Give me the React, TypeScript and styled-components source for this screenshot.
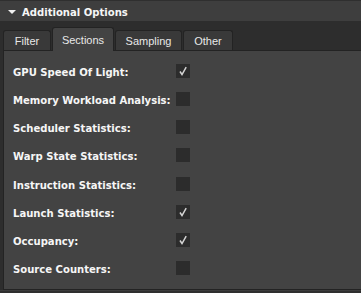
import React from "react";
import styled, { createGlobalStyle } from "styled-components";

const Global = createGlobalStyle`
  html, body { margin: 0; padding: 0; background: #2d2d2d; }
  body { font-family: "DejaVu Sans Condensed", "DejaVu Sans", sans-serif; }
`;

const Root = styled.div`
  width: 361px;
  height: 293px;
  display: flex;
  flex-direction: column;
  background: #2d2d2d;
  overflow: hidden;
`;

const Header = styled.div`
  height: 21px;
  box-sizing: border-box;
  padding: 2px 0 0 8px;
  border-top: 1px solid #2f2f2f;
  background: #3e3e3e;
  display: flex;
  align-items: center;
  gap: 6px;
  color: #f6f6f6;
  font-family: "DejaVu Sans Condensed", "DejaVu Sans", sans-serif;
  font-stretch: condensed;
  font-weight: bold;
  font-size: 11.2px;
`;

const Arrow = styled.span`
  width: 0;
  height: 0;
  border-left: 4px solid transparent;
  border-right: 4px solid transparent;
  border-top: 4px solid #f0f0f0;
  margin-top: 0px;
`;

const TabBar = styled.div`
  display: flex;
  align-items: flex-end;
  padding: 0 0 0 3px;
  height: 29px;
  box-sizing: border-box;
`;

const Tab = styled.div<{ $active?: boolean; $w: number }>`
  width: ${(p) => p.$w}px;
  height: ${(p) => (p.$active ? 24 : 20)}px;
  box-sizing: border-box;
  margin-right: 1px;
  border: 1px solid #232323;
  border-bottom: none;
  border-radius: 3px 3px 0 0;
  background: ${(p) => (p.$active ? "#434343" : "#393939")};
  color: #e8e8e8;
  font-family: "Liberation Sans", Arial, sans-serif;
  font-size: 11px;
  display: flex;
  align-items: center;
  justify-content: center;
  padding-top: ${(p) => (p.$active ? 0 : 1)}px;
  position: relative;
  z-index: ${(p) => (p.$active ? 2 : 1)};
  margin-bottom: ${(p) => (p.$active ? -1 : 0)}px;
`;

const Panel = styled.div`
  margin-left: 3px;
  height: 240px;
  background: #434343;
  border-left: 1px solid #232323;
  border-top: 1px solid #232323;
  border-bottom: 1px solid #232323;
  box-sizing: border-box;
  padding: 15px 0 0 9px;
  display: flex;
  flex-direction: column;
`;

const Row = styled.div`
  height: 28.14px;
  flex: none;
  display: grid;
  grid-template-columns: 163px 14px;
  align-items: start;
`;

const Label = styled.span`
  color: #f6f6f6;
  font-family: "DejaVu Sans Condensed", "DejaVu Sans", sans-serif;
  font-stretch: condensed;
  font-weight: bold;
  font-size: 11.2px;
  line-height: 14px;
  white-space: nowrap;
`;

const Box = styled.span`
  width: 14px;
  height: 14px;
  margin-top: -2px;
  background: #2c2c2c;
  display: flex;
  align-items: center;
  justify-content: center;
`;

const Bottom = styled.div`
  flex: 1;
  border-top: 1px solid #3c3c3c;
  background: #2f2f2f;
`;

const rows: [string, boolean][] = [
  ["GPU Speed Of Light:", true],
  ["Memory Workload Analysis:", false],
  ["Scheduler Statistics:", false],
  ["Warp State Statistics:", false],
  ["Instruction Statistics:", false],
  ["Launch Statistics:", true],
  ["Occupancy:", true],
  ["Source Counters:", false],
];

const tabs: [string, number][] = [
  ["Filter", 48],
  ["Sections", 62],
  ["Sampling", 67],
  ["Other", 50],
];

export default function App() {
  return (
    <Root>
      <Global />
      <Header>
        <Arrow />
        Additional Options
      </Header>
      <TabBar>
        {tabs.map(([t, w]) => (
          <Tab key={t} $w={w} $active={t === "Sections"}>
            {t}
          </Tab>
        ))}
      </TabBar>
      <Panel>
        {rows.map(([l, c]) => (
          <Row key={l}>
            <Label>{l}</Label>
            <Box>
              {c && (
                <svg width="10" height="10" viewBox="0 0 10 10">
                  <path d="M2 5.5 L4 8.5 L8.2 1.2" stroke="#d4d4d4" strokeWidth="1.5" fill="none" />
                </svg>
              )}
            </Box>
          </Row>
        ))}
      </Panel>
      <Bottom />
    </Root>
  );
}
